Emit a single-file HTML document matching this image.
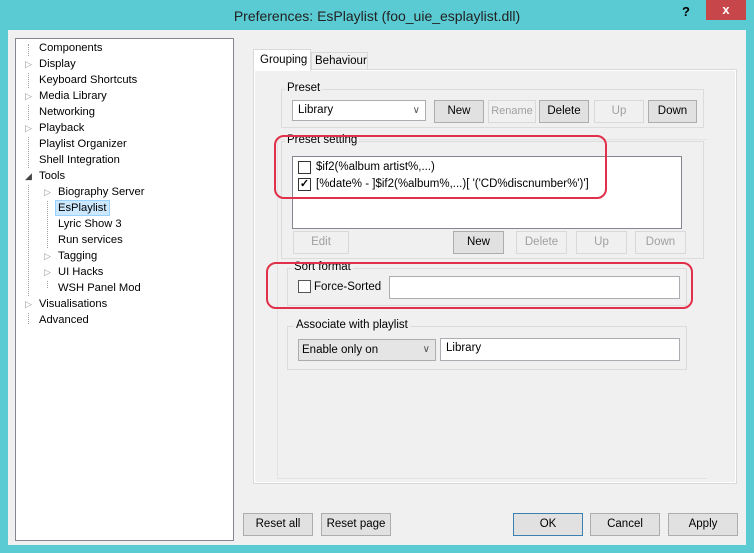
<html><head><style>
body{margin:0;width:754px;height:553px;background:#5bcbd3;font-family:"Liberation Sans",sans-serif;font-size:12px;color:#000;position:relative;overflow:hidden}
div,span{position:absolute;box-sizing:border-box}
.btn{background:#e1e1e1;border:1px solid #adadad;text-align:center;line-height:21px;height:23px;font-size:11.5px}
.dis{background:#f0f0f0;border:1px solid #d9d9d9;color:#a0a0a0}
.grp{border:1px solid #dcdcdc}
.lbl{background:#f0f0f0;padding:0 2px;font-size:11.5px}
.ti{white-space:nowrap;line-height:16px;font-size:11.2px}
.cb{width:13px;height:13px;border:1px solid #333;background:#fff}
.red{border:2px solid #e0304a;border-radius:10px}
</style></head><body>
<div style="left:0;top:0;width:754px;height:30px;text-align:center;font-size:14px;line-height:32px;color:#222">Preferences: EsPlaylist (foo_uie_esplaylist.dll)</div>
<div style="left:682px;top:4px;font-weight:bold;font-size:13px">?</div>
<div style="left:706px;top:0;width:40px;height:20px;background:#c7464a;color:#fff;text-align:center;line-height:20px;font-size:13px;font-weight:bold">x</div>
<div style="left:8px;top:30px;width:738px;height:515px;background:#f0f0f0"></div>
<div style="left:15px;top:38px;width:219px;height:503px;background:#fff;border:1px solid #828790"></div>
<div class="ti" style="left:39px;top:40px">Components</div>
<div class="ti" style="left:39px;top:56px">Display</div>
<div class="ti" style="left:39px;top:72px">Keyboard Shortcuts</div>
<div class="ti" style="left:39px;top:88px">Media Library</div>
<div class="ti" style="left:39px;top:104px">Networking</div>
<div class="ti" style="left:39px;top:120px">Playback</div>
<div class="ti" style="left:39px;top:136px">Playlist Organizer</div>
<div class="ti" style="left:39px;top:152px">Shell Integration</div>
<div class="ti" style="left:39px;top:168px">Tools</div>
<div class="ti" style="left:58px;top:184px">Biography Server</div>
<div class="ti" style="left:55px;top:200px;background:#cce8ff;border:1px solid #99d1ff;padding:0 2px;line-height:14px">EsPlaylist</div>
<div class="ti" style="left:58px;top:216px">Lyric Show 3</div>
<div class="ti" style="left:58px;top:232px">Run services</div>
<div class="ti" style="left:58px;top:248px">Tagging</div>
<div class="ti" style="left:58px;top:264px">UI Hacks</div>
<div class="ti" style="left:58px;top:280px">WSH Panel Mod</div>
<div class="ti" style="left:39px;top:296px">Visualisations</div>
<div class="ti" style="left:39px;top:312px">Advanced</div>
<div style="left:28px;top:44px;height:280px;border-left:1px dotted #a0a0a0"></div>
<div style="left:47px;top:188px;height:100px;border-left:1px dotted #a0a0a0"></div>
<div class="ti" style="left:25px;top:56px;color:#999;font-size:9px;background:#fff">▷</div>
<div class="ti" style="left:25px;top:88px;color:#999;font-size:9px;background:#fff">▷</div>
<div class="ti" style="left:25px;top:120px;color:#999;font-size:9px;background:#fff">▷</div>
<div class="ti" style="left:25px;top:168px;color:#444;font-size:9px;background:#fff">◢</div>
<div class="ti" style="left:44px;top:184px;color:#999;font-size:9px;background:#fff">▷</div>
<div class="ti" style="left:44px;top:248px;color:#999;font-size:9px;background:#fff">▷</div>
<div class="ti" style="left:44px;top:264px;color:#999;font-size:9px;background:#fff">▷</div>
<div class="ti" style="left:25px;top:296px;color:#999;font-size:9px;background:#fff">▷</div>

<div style="left:253px;top:69px;width:484px;height:415px;background:#fff;border:1px solid #d9d9d9"></div>
<div style="left:255px;top:71px;width:480px;height:411px;background:#f0f0f0"></div>
<div style="left:253px;top:49px;width:58px;height:22px;background:#fff;border:1px solid #d9d9d9;border-bottom:none;line-height:20px;padding-left:6px;font-size:11.5px">Grouping</div>
<div style="left:311px;top:52px;width:57px;height:18px;background:#f0f0f0;border:1px solid #d9d9d9;line-height:16px;padding-left:3px;font-size:11.5px">Behaviour</div>
<div style="left:277px;top:139px;width:430px;height:340px;border:1px solid #e3e3e3;border-right:none"></div>

<div class="grp" style="left:281px;top:89px;width:423px;height:39px"></div>
<div class="lbl" style="left:285px;top:82px">Preset</div>
<div style="left:292px;top:100px;width:134px;height:21px;background:#fff;border:1px solid #abadb3;padding-left:5px;line-height:19px;font-size:11.5px">Library<span style="right:5px;top:0;color:#555;font-size:10px">∨</span></div>
<div class="btn" style="left:434px;top:100px;width:50px">New</div>
<div class="btn dis" style="left:488px;top:100px;width:48px;font-size:11px">Rename</div>
<div class="btn" style="left:539px;top:100px;width:50px">Delete</div>
<div class="btn dis" style="left:594px;top:100px;width:50px">Up</div>
<div class="btn" style="left:648px;top:100px;width:49px">Down</div>

<div class="grp" style="left:281px;top:141px;width:423px;height:118px"></div>
<div class="lbl" style="left:285px;top:134px">Preset setting</div>
<div style="left:292px;top:156px;width:390px;height:73px;background:#fff;border:1px solid #828790"></div>
<div class="cb" style="left:298px;top:161px"></div>
<div class="ti" style="left:316px;top:159px;font-size:11.5px">$if2(%album artist%,...)</div>
<div class="cb" style="left:298px;top:178px;text-align:center;line-height:11px;font-size:11px;font-weight:bold">✓</div>
<div class="ti" style="left:316px;top:176px;font-size:11.5px">[%date% - ]$if2(%album%,...)[ '('CD%discnumber%')']</div>
<div class="btn dis" style="left:293px;top:231px;width:56px">Edit</div>
<div class="btn" style="left:453px;top:231px;width:51px">New</div>
<div class="btn dis" style="left:516px;top:231px;width:51px">Delete</div>
<div class="btn dis" style="left:576px;top:231px;width:51px">Up</div>
<div class="btn dis" style="left:635px;top:231px;width:51px">Down</div>

<div class="grp" style="left:287px;top:268px;width:400px;height:38px"></div>
<div class="lbl" style="left:292px;top:261px">Sort format</div>
<div class="cb" style="left:298px;top:280px;border-color:#555"></div>
<div class="ti" style="left:314px;top:279px;font-size:11.5px">Force-Sorted</div>
<div style="left:389px;top:276px;width:291px;height:23px;background:#fff;border:1px solid #abadb3"></div>

<div class="grp" style="left:287px;top:326px;width:400px;height:44px"></div>
<div class="lbl" style="left:294px;top:319px">Associate with playlist</div>
<div style="left:298px;top:339px;width:138px;height:22px;background:#e5e5e5;border:1px solid #adadad;padding-left:3px;line-height:20px;font-size:11.5px">Enable only on<span style="right:5px;top:0;color:#555;font-size:10px">∨</span></div>
<div style="left:440px;top:338px;width:240px;height:23px;background:#fff;border:1px solid #abadb3;padding-left:5px;line-height:19px;font-size:11.5px">Library</div>

<div class="red" style="left:274px;top:135px;width:333px;height:64px"></div>
<div class="red" style="left:266px;top:262px;width:427px;height:47px"></div>

<div class="btn" style="left:243px;top:513px;width:70px">Reset all</div>
<div class="btn" style="left:321px;top:513px;width:70px">Reset page</div>
<div class="btn" style="left:513px;top:513px;width:70px;border-color:#3c7fb1">OK</div>
<div class="btn" style="left:590px;top:513px;width:70px">Cancel</div>
<div class="btn" style="left:668px;top:513px;width:70px">Apply</div>
</body></html>
